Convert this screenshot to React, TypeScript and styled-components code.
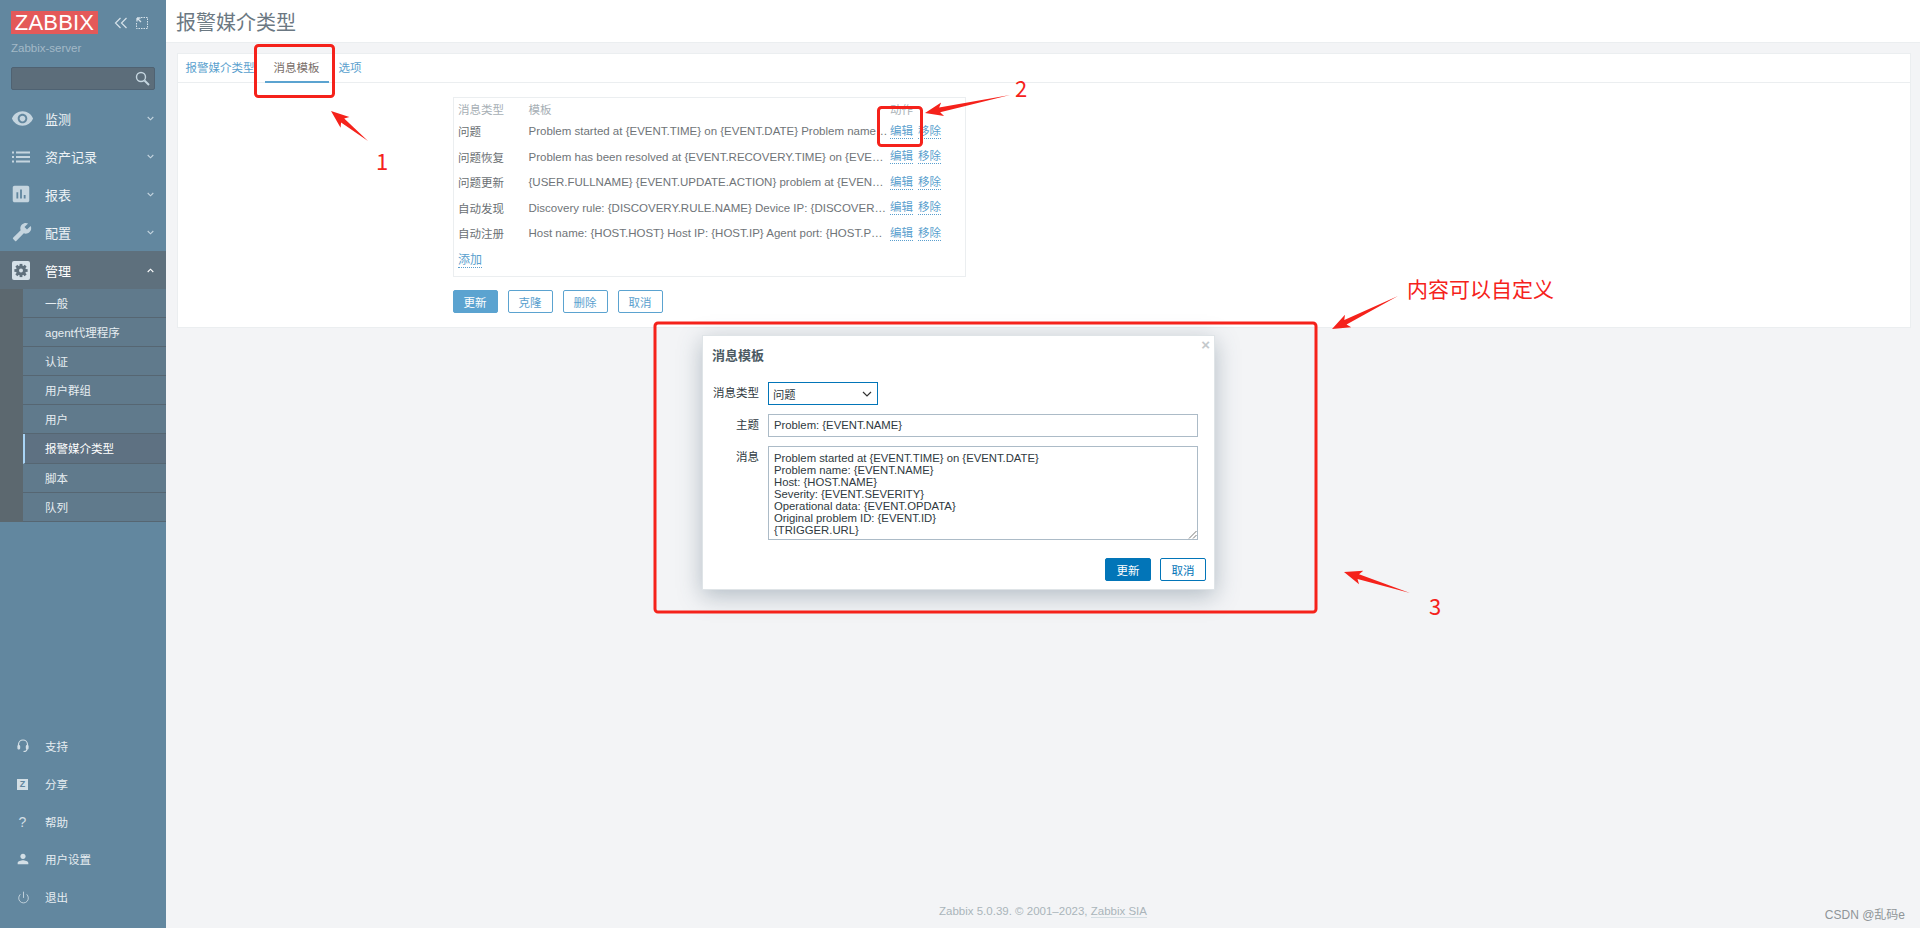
import styled, { createGlobalStyle } from "styled-components";
import { MdAssessment, MdBuild, MdPerson, MdVisibility } from "react-icons/md";
import { Power } from "lucide-react";
import type { ReactNode } from "react";

const GlobalStyle = createGlobalStyle`
  html, body { margin: 0; padding: 0; height: 928px; overflow: hidden; }
  body {
    font-family: "Liberation Sans", Arial, "Noto Sans CJK SC", sans-serif;
    font-size: 12px;
    color: #4f4f4f;
    background: #f3f4f6;
  }
  * { box-sizing: border-box; }
`;

const Page = styled.div`
  position: relative;
  display: flex;
  width: 1920px;
  height: 928px;
  overflow: hidden;
`;

const Sidebar = styled.aside`
  width: 166px;
  flex: none;
  display: flex;
  flex-direction: column;
  background: #62879f;
  color: #f2f6f8;
`;

const Brand = styled.div`
  display: flex;
  align-items: center;
  padding: 11px 0 0 11px;
  gap: 16px;
`;

const Logo = styled.div`
  width: 87px;
  height: 23px;
  background: #e45959;
  color: #fff;
  font-size: 22px;
  line-height: 24px;
  text-align: center;
  letter-spacing: 0.2px;
`;

const BrandTools = styled.div`
  display: flex;
  align-items: center;
  gap: 8px;
`;

const ServerName = styled.div`
  margin: 7px 0 0 11px;
  height: 15px;
  line-height: 15px;
  color: #a2b9c7;
  font-size: 11.5px;
`;

const SearchBox = styled.div`
  display: flex;
  align-items: center;
  justify-content: flex-end;
  margin: 11px 11px 0;
  height: 23px;
  padding-right: 4px;
  background: #5c6d7a;
  border: 1px solid #4f6272;
  border-radius: 2px;
`;

const Menu = styled.nav`
  margin-top: 10px;
`;

const MenuItem = styled.div<{ $active?: boolean }>`
  display: flex;
  align-items: center;
  height: 37.8px;
  padding-left: 12px;
  background: ${(p) => (p.$active ? "#5e707d" : "transparent")};
  color: ${(p) => (p.$active ? "#fff" : "#eef3f6")};
  font-size: 13px;
`;

const MenuIcon = styled.span`
  width: 33px;
  flex: none;
  display: flex;
  align-items: center;
  color: #c5d5df;
`;

const MenuLabel = styled.span`
  flex: 1;
`;

const MenuChevron = styled.svg`
  margin-right: 12px;
  flex: none;
`;

const SubMenuWrap = styled.div`
  padding-left: 23px;
  background: #5c686f;
`;

const SubItem = styled.div<{ $active?: boolean }>`
  height: 29.1px;
  padding-left: ${(p) => (p.$active ? "20px" : "22px")};
  line-height: 30px;
  font-size: 11.5px;
  color: ${(p) => (p.$active ? "#fff" : "#e6edf1")};
  background: ${(p) => (p.$active ? "#5e7182" : "#607a8c")};
  border-bottom: 1px solid #566672;
  border-left: ${(p) => (p.$active ? "2px solid #a9d4f5" : "none")};
`;

const BottomMenu = styled.div`
  margin-top: auto;
  padding-bottom: 12px;
`;

const BottomItem = styled.div`
  display: flex;
  align-items: center;
  height: 37.7px;
  padding-left: 17px;
  font-size: 11.5px;
  color: #e6edf1;
`;

const BottomIcon = styled.span`
  width: 28px;
  flex: none;
  display: flex;
  align-items: center;
  color: #d3dfe6;
`;

const ShareBadge = styled.span`
  width: 11px;
  height: 11px;
  background: #d3dfe6;
  color: #62879f;
  font-size: 9px;
  font-weight: bold;
  line-height: 11px;
  text-align: center;
`;

const Help = styled.span`
  width: 11px;
  font-size: 14px;
  text-align: center;
  color: #d3dfe6;
`;

const Main = styled.main`
  flex: 1;
  display: flex;
  flex-direction: column;
  min-width: 0;
`;

const Header = styled.header`
  height: 43px;
  padding-left: 10px;
  background: #fff;
  border-bottom: 1px solid #ebeef0;
`;

const Title = styled.h1`
  margin: 0;
  font-size: 20px;
  font-weight: normal;
  line-height: 46px;
  color: #6b7882;
`;

const Card = styled.section`
  margin: 10px 9px 0 10.5px;
  height: 275px;
  background: #fff;
  border: 1px solid #ebeef0;
`;

const Tabs = styled.div`
  display: flex;
  height: 29px;
  padding-left: 8px;
  border-bottom: 1px solid #ebeef0;
`;

const Tab = styled.div<{ $active?: boolean }>`
  height: 29px;
  line-height: 28px;
  margin-right: 10px;
  padding: 0 ${(p) => (p.$active ? "9px" : "0")};
  color: ${(p) => (p.$active ? "#7a6f6a" : "#5a9fce")};
  border-bottom: ${(p) => (p.$active ? "2px solid #5ba3d0" : "none")};
  font-size: 11.5px;
`;

const FormBody = styled.div`
  margin: 14px 0 0 275px;
  width: 513px;
`;

const TemplateBox = styled.div`
  height: 180px;
  padding: 0 4px 0 4.5px;
  border: 1px solid #ebeef0;
`;

const TemplateRow = styled.div`
  display: grid;
  grid-template-columns: 70.5px 361.5px 28px 1fr;
  height: 25.5px;
  align-items: center;
  font-size: 11.5px;
  &:first-child { height: 20.5px; padding-top: 1px; }
`;

const HeadCell = styled.span`
  color: #a7afb5;
`;

const TypeCell = styled.span`
  color: #6a6f73;
`;

const TemplateCell = styled.span`
  color: #6f7478;
  font-size: 11.5px;
  white-space: nowrap;
`;

const DotLink = styled.a`
  justify-self: start;
  color: #5a9fce;
  line-height: 14px;
  border-bottom: 1px dotted #5a9fce;
`;

const AddRow = styled.div`
  padding-top: 7px;
`;

const Actions = styled.div`
  display: flex;
  gap: 10px;
  margin-top: 13px;
`;

const Button = styled.button<{ $primary?: boolean }>`
  width: 45px;
  height: 23px;
  padding: 0;
  font: inherit;
  font-size: 11.5px;
  color: ${(p) => (p.$primary ? "#fff" : "#5a9fce")};
  background: ${(p) => (p.$primary ? "#5ba3d0" : "#fff")};
  border: 1px solid #5ba3d0;
  border-radius: 2px;
`;

const Footer = styled.footer`
  margin-top: auto;
  height: 23px;
  text-align: center;
  font-size: 11.5px;
  color: #aab4ba;
`;

const FooterLink = styled.span`
  border-bottom: 1px solid #d3dde2;
`;

const Watermark = styled.div`
  position: absolute;
  right: 15px;
  top: 905px;
  font-size: 12px;
  color: #8f9598;
`;

const Dialog = styled.div`
  position: absolute;
  left: 702px;
  top: 335px;
  width: 513px;
  height: 255px;
  padding: 0 9px;
  background: #fff;
  border: 1px solid #dfe4e7;
  box-shadow: 0 6px 22px rgba(60, 85, 105, 0.35);
`;

const DialogClose = styled.span`
  position: absolute;
  right: 4px;
  top: 0;
  font-size: 15px;
  font-weight: bold;
  color: #c4c9cc;
`;

const DialogTitle = styled.h2`
  margin: 0;
  padding-top: 9px;
  height: 46px;
  font-size: 13px;
  font-weight: bold;
  color: #4b5a63;
`;

const FieldRow = styled.div`
  display: grid;
  grid-template-columns: 47px 430px;
  column-gap: 9px;
  margin-bottom: 9px;
  font-size: 11.3px;
  color: #2f3a41;
`;

const FieldLabel = styled.label`
  text-align: right;
  line-height: 23px;
  font-size: 11.5px;
  white-space: nowrap;
`;

const Select = styled.div`
  display: flex;
  align-items: center;
  justify-content: space-between;
  width: 110px;
  height: 23px;
  padding: 0 5px 0 4px;
  border: 1px solid #0275b8;
`;

const TextInput = styled.div`
  height: 23px;
  padding: 0 5px;
  line-height: 21px;
  border: 1px solid #acbbc7;
`;

const TextArea = styled.div`
  position: relative;
  height: 94px;
  padding: 5px 5px;
  line-height: 12px;
  border: 1px solid #acbbc7;
  white-space: pre;
`;

const ResizeGrip = styled.svg`
  position: absolute;
  right: 0;
  bottom: 0;
`;

const DialogActions = styled.div`
  display: flex;
  justify-content: flex-end;
  gap: 9px;
  margin-top: 18px;
  margin-right: -1px;
`;

const DialogButton = styled.button<{ $primary?: boolean }>`
  width: 46px;
  height: 23px;
  padding: 0;
  font: inherit;
  font-size: 11.5px;
  color: ${(p) => (p.$primary ? "#fff" : "#0275b8")};
  background: ${(p) => (p.$primary ? "#0275b8" : "#fff")};
  border: 1px solid #0275b8;
  border-radius: 2px;
`;

const Annotations = styled.svg`
  position: absolute;
  left: 0;
  top: 0;
  pointer-events: none;
`;

const Note = styled.div<{ $x: number; $y: number; $size: number }>`
  position: absolute;
  left: ${(p) => p.$x}px;
  top: ${(p) => p.$y}px;
  font-family: "Noto Sans CJK SC", "Liberation Sans", sans-serif;
  font-size: ${(p) => p.$size}px;
  line-height: 1;
  color: #f5221b;
  white-space: nowrap;
`;

function ListIcon() {
  return (
    <svg width="18" height="12" viewBox="0 0 18 12" fill="currentColor">
      <rect x="0" y="0.5" width="2" height="2" />
      <rect x="0" y="5" width="2" height="2" />
      <rect x="0" y="9.5" width="2" height="2" />
      <rect x="4" y="0.5" width="14" height="2" />
      <rect x="4" y="5" width="14" height="2" />
      <rect x="4" y="9.5" width="14" height="2" />
    </svg>
  );
}

function GearBox() {
  return (
    <svg width="18" height="19" viewBox="0 0 18 19">
      <rect width="18" height="19" rx="2" fill="#d5e1e9" />
      <g fill="#5e707d" transform="translate(9 9.5)">
        {[0, 45, 90, 135].map((r) => (
          <rect key={r} x="-1.4" y="-6.6" width="2.8" height="13.2" transform={`rotate(${r})`} />
        ))}
        <circle r="5" />
      </g>
      <circle cx="9" cy="9.5" r="2" fill="#d5e1e9" />
    </svg>
  );
}

function Headset() {
  return (
    <svg width="12" height="14" viewBox="0 0 12 14" fill="none" stroke="currentColor" strokeWidth="1.2">
      <path d="M1.5 8V5.5a4.5 4.5 0 0 1 9 0V8" />
      <rect x="1" y="6.5" width="1.6" height="3.5" rx="0.8" fill="currentColor" />
      <rect x="9.4" y="6.5" width="1.6" height="3.5" rx="0.8" fill="currentColor" />
      <path d="M10 10c0 1.8-1.5 2.5-3.5 2.5" />
    </svg>
  );
}

function Chevron({ up }: { up?: boolean }) {
  return (
    <MenuChevron width="7" height="5" viewBox="0 0 7 5" fill="none" stroke={up ? "#fff" : "#c5d5df"} strokeWidth="1.1">
      <path d={up ? "M0.7 4L3.5 1.2 6.3 4" : "M0.7 1L3.5 3.8 6.3 1"} />
    </MenuChevron>
  );
}

// tapered arrow like the ones a screenshot tool draws
function Arrow({ from, to }: { from: [number, number]; to: [number, number] }) {
  const dx = to[0] - from[0];
  const dy = to[1] - from[1];
  const len = Math.hypot(dx, dy);
  const ux = dx / len;
  const uy = dy / len;
  const px = -uy;
  const py = ux;
  const at = (back: number, side: number) =>
    `${to[0] - ux * back + px * side},${to[1] - uy * back + py * side}`;
  const points = [
    `${from[0]},${from[1]}`,
    at(15, 2.5),
    at(18, 7),
    `${to[0]},${to[1]}`,
    at(18, -7),
    at(15, -2.5),
  ].join(" ");
  return <polygon points={points} fill="#f5221b" />;
}

const mainMenu: { label: string; icon: ReactNode }[] = [
  { label: "监测", icon: <MdVisibility size={23} style={{ marginLeft: -1 }} /> },
  { label: "资产记录", icon: <ListIcon /> },
  { label: "报表", icon: <MdAssessment size={22} style={{ marginLeft: -2 }} /> },
  { label: "配置", icon: <MdBuild size={20} style={{ transform: "scaleX(-1)" }} /> },
];

const subMenu = ["一般", "agent代理程序", "认证", "用户群组", "用户", "报警媒介类型", "脚本", "队列"];

const bottomMenu: { label: string; icon: ReactNode }[] = [
  { label: "支持", icon: <Headset /> },
  { label: "分享", icon: <ShareBadge>Z</ShareBadge> },
  { label: "帮助", icon: <Help>?</Help> },
  { label: "用户设置", icon: <MdPerson size={16} style={{ marginLeft: -2 }} /> },
  { label: "退出", icon: <Power size={13} strokeWidth={1.5} /> },
];

const templates = [
  ["问题", "Problem started at {EVENT.TIME} on {EVENT.DATE} Problem name…"],
  ["问题恢复", "Problem has been resolved at {EVENT.RECOVERY.TIME} on {EVE…"],
  ["问题更新", "{USER.FULLNAME} {EVENT.UPDATE.ACTION} problem at {EVEN…"],
  ["自动发现", "Discovery rule: {DISCOVERY.RULE.NAME} Device IP: {DISCOVER…"],
  ["自动注册", "Host name: {HOST.HOST} Host IP: {HOST.IP} Agent port: {HOST.P…"],
];

const messageBody = `Problem started at {EVENT.TIME} on {EVENT.DATE}
Problem name: {EVENT.NAME}
Host: {HOST.NAME}
Severity: {EVENT.SEVERITY}
Operational data: {EVENT.OPDATA}
Original problem ID: {EVENT.ID}
{TRIGGER.URL}`;

export default function App() {
  return (
    <Page>
      <GlobalStyle />
      <Sidebar>
        <Brand>
          <Logo>ZABBIX</Logo>
          <BrandTools>
            <svg width="14" height="12" viewBox="0 0 14 12" fill="none" stroke="#d5e1e9" strokeWidth="1.2">
              <path d="M6.5 1L1.5 6l5 5M12.5 1l-5 5 5 5" />
            </svg>
            <svg width="12" height="12" viewBox="0 0 12 12" fill="none" stroke="#d5e1e9" strokeWidth="1">
              <path d="M5 .5h6.5v11H.5V6" strokeDasharray="1.5 1" />
              <path d="M1 1l4 4M1 1h3.5M1 1v3.5" strokeWidth="1.3" />
            </svg>
          </BrandTools>
        </Brand>
        <ServerName>Zabbix-server</ServerName>
        <SearchBox>
          <svg width="15" height="15" viewBox="0 0 15 15" fill="none" stroke="#c5d5df" strokeWidth="1.4">
            <circle cx="6" cy="6" r="4.5" />
            <path d="M9.5 9.5L14 14" strokeWidth="2" />
          </svg>
        </SearchBox>
        <Menu>
          {mainMenu.map((m) => (
            <MenuItem key={m.label}>
              <MenuIcon>{m.icon}</MenuIcon>
              <MenuLabel>{m.label}</MenuLabel>
              <Chevron />
            </MenuItem>
          ))}
          <MenuItem $active>
            <MenuIcon>
              <GearBox />
            </MenuIcon>
            <MenuLabel>管理</MenuLabel>
            <Chevron up />
          </MenuItem>
          <SubMenuWrap>
            {subMenu.map((s) => (
              <SubItem key={s} $active={s === "报警媒介类型"}>
                {s}
              </SubItem>
            ))}
          </SubMenuWrap>
        </Menu>
        <BottomMenu>
          {bottomMenu.map((m) => (
            <BottomItem key={m.label}>
              <BottomIcon>{m.icon}</BottomIcon>
              {m.label}
            </BottomItem>
          ))}
        </BottomMenu>
      </Sidebar>

      <Main>
        <Header>
          <Title>报警媒介类型</Title>
        </Header>
        <Card>
          <Tabs>
            <Tab>报警媒介类型</Tab>
            <Tab $active>消息模板</Tab>
            <Tab>选项</Tab>
          </Tabs>
          <FormBody>
            <TemplateBox>
              <TemplateRow>
                <HeadCell>消息类型</HeadCell>
                <HeadCell>模板</HeadCell>
                <HeadCell>动作</HeadCell>
                <span />
              </TemplateRow>
              {templates.map(([type, text]) => (
                <TemplateRow key={type}>
                  <TypeCell>{type}</TypeCell>
                  <TemplateCell>{text}</TemplateCell>
                  <DotLink>编辑</DotLink>
                  <DotLink>移除</DotLink>
                </TemplateRow>
              ))}
              <AddRow>
                <DotLink>添加</DotLink>
              </AddRow>
            </TemplateBox>
            <Actions>
              <Button $primary>更新</Button>
              <Button>克隆</Button>
              <Button>删除</Button>
              <Button>取消</Button>
            </Actions>
          </FormBody>
        </Card>
        <Footer>
          Zabbix 5.0.39. © 2001–2023, <FooterLink>Zabbix SIA</FooterLink>
        </Footer>
      </Main>

      <Dialog>
        <DialogClose>×</DialogClose>
        <DialogTitle>消息模板</DialogTitle>
        <FieldRow>
          <FieldLabel>消息类型</FieldLabel>
          <Select>
            问题
            <svg width="10" height="6" viewBox="0 0 10 6" fill="none" stroke="#333" strokeWidth="1.2">
              <path d="M1 1l4 4 4-4" />
            </svg>
          </Select>
        </FieldRow>
        <FieldRow>
          <FieldLabel>主题</FieldLabel>
          <TextInput>Problem: {"{EVENT.NAME}"}</TextInput>
        </FieldRow>
        <FieldRow>
          <FieldLabel>消息</FieldLabel>
          <TextArea>
            {messageBody}
            <ResizeGrip width="9" height="9" viewBox="0 0 9 9" stroke="#555" strokeWidth="0.8">
              <path d="M1 8.5L8.5 1M5 8.5L8.5 5" />
            </ResizeGrip>
          </TextArea>
        </FieldRow>
        <DialogActions>
          <DialogButton $primary>更新</DialogButton>
          <DialogButton>取消</DialogButton>
        </DialogActions>
      </Dialog>

      <Annotations width="1920" height="928" viewBox="0 0 1920 928" fill="none" stroke="#f5221b" strokeWidth="3">
        <rect x="255.5" y="45.5" width="78" height="51" rx="3" />
        <rect x="878.5" y="107.5" width="43" height="38" rx="3" />
        <rect x="655" y="323" width="661" height="289" rx="3" />
        <g stroke="none">
          <Arrow from={[368, 141]} to={[331, 111]} />
          <Arrow from={[1010, 95]} to={[925, 113]} />
          <Arrow from={[1398, 296]} to={[1332, 329]} />
          <Arrow from={[1410, 593]} to={[1344, 572]} />
        </g>
      </Annotations>
      <Note $x={376} $y={149} $size={22}>1</Note>
      <Note $x={1015} $y={76} $size={22}>2</Note>
      <Note $x={1429} $y={594} $size={22}>3</Note>
      <Note $x={1407} $y={278} $size={21}>内容可以自定义</Note>
      <Watermark>CSDN @乱码e</Watermark>
    </Page>
  );
}
